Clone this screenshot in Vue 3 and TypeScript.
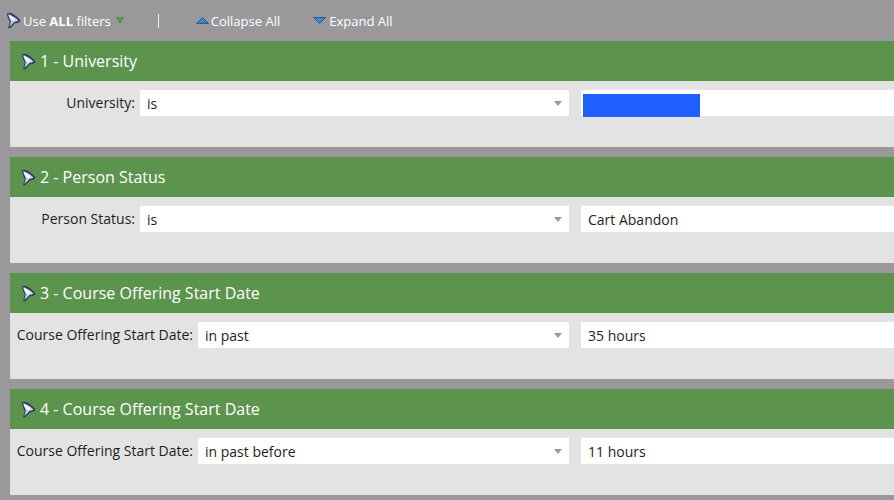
<script setup lang="ts">
interface Filter {
  title: string
  label: string
  op: string
  value: string
  redacted?: boolean
  wide?: boolean
}

const filters: Filter[] = [
  { title: '1 - University', label: 'University:', op: 'is', value: '', redacted: true },
  { title: '2 - Person Status', label: 'Person Status:', op: 'is', value: 'Cart Abandon' },
  { title: '3 - Course Offering Start Date', label: 'Course Offering Start Date:', op: 'in past', value: '35 hours', wide: true },
  { title: '4 - Course Offering Start Date', label: 'Course Offering Start Date:', op: 'in past before', value: '11 hours', wide: true },
]
</script>

<template>
  <div class="page">
    <div class="toolbar">
      <svg class="funnel" viewBox="0 0 16 18" width="15" height="17">
        <path d="M1 1.5 C3 0 6 1 9 3 C12 5 15 7.5 15.5 9.5 C13.5 11.5 11 12 9.5 12 L4.5 17.5 L2.2 17 L4 10.5 C2.5 7 1 4 1 1.5 Z" fill="#2b3d5c" />
        <path d="M2.2 2.4 C5 2.6 9.5 5.4 13.4 9 C12 10 10.5 10.4 9 10.6 L3.6 15.8 L5.2 10 C4 7.5 2.8 5 2.2 2.4 Z" fill="#b4c3da" />
        <path d="M2.8 3 C5 3.6 8 5.6 10.2 8.4 L7.8 9.4 L6 8.6 C4.8 6.8 3.6 5 2.8 3 Z" fill="#eef2f8" />
      </svg>
      <span class="tool-text use">Use <b>ALL</b> filters</span>
      <svg class="green" viewBox="0 0 8 7" width="8" height="7">
        <path d="M0.8 0.8 H7.2 L4 6.2 Z" fill="#55a844" stroke="#3d7f33" stroke-width="0.7" />
      </svg>
      <span class="divider"></span>
      <svg class="tri collapse-tri" viewBox="0 0 13 7" width="13" height="7">
        <path d="M6.5 0.5 L12.5 6.5 H0.5 Z" fill="#3f86c8" stroke="#1b4f86" stroke-width="0.8" />
      </svg>
      <span class="tool-text collapse">Collapse All</span>
      <svg class="tri" viewBox="0 0 13 7" width="13" height="7">
        <path d="M0.5 0.5 H12.5 L6.5 6.5 Z" fill="#3f86c8" stroke="#1b4f86" stroke-width="0.8" />
      </svg>
      <span class="tool-text">Expand All</span>
    </div>

    <section v-for="f in filters" :key="f.title" class="card">
      <header class="card-head">
        <svg class="head-funnel" viewBox="0 0 16 18" width="15" height="17">
          <path d="M1 1.5 C3 0 6 1 9 3 C12 5 15 7.5 15.5 9.5 C13.5 11.5 11 12 9.5 12 L4.5 17.5 L2.2 17 L4 10.5 C2.5 7 1 4 1 1.5 Z" fill="#2b3d5c" />
          <path d="M2.2 2.4 C5 2.6 9.5 5.4 13.4 9 C12 10 10.5 10.4 9 10.6 L3.6 15.8 L5.2 10 C4 7.5 2.8 5 2.2 2.4 Z" fill="#c8d4e6" />
          <path d="M2.8 3 C5 3.6 8 5.6 10.2 8.4 L7.8 9.4 L6 8.6 C4.8 6.8 3.6 5 2.8 3 Z" fill="#f4f7fb" />
        </svg>
        <h2>{{ f.title }}</h2>
      </header>
      <div class="card-body">
        <label class="field-label" :class="{ wide: f.wide }">{{ f.label }}</label>
        <div class="select">
          <span>{{ f.op }}</span>
          <svg viewBox="0 0 8 5" width="8" height="5"><path d="M0 0 H8 L4 5 Z" fill="#9b9b9b" /></svg>
        </div>
        <div class="value">
          <span v-if="f.redacted" class="redact"></span>
          <span v-else>{{ f.value }}</span>
        </div>
      </div>
    </section>
  </div>
</template>

<style>
html, body {
  margin: 0;
  background: #9a989b;
}
</style>

<style scoped>
.page {
  width: 894px;
  height: 500px;
  overflow: hidden;
  background: #9a989b;
  font-family: "Open Sans", "Liberation Sans", sans-serif;
  padding-left: 10px;
  box-sizing: border-box;
}

.toolbar {
  display: flex;
  align-items: center;
  height: 41px;
  margin-left: -4px;
  color: #fff;
  font-size: 13px;
}

.tool-text {
  white-space: nowrap;
}

.use {
  margin-left: 2px;
}

.use b {
  font-weight: 700;
}

.green {
  margin-left: 5px;
}

.divider {
  width: 1px;
  height: 14px;
  background: #f2f2f2;
  margin: 0 37px 0 34px;
}

.collapse {
  margin-right: 33px;
}

.tri {
  margin-right: 3px;
}

.collapse-tri {
  margin-right: 2px;
}

.card {
  width: 884px;
  height: 106px;
  margin-bottom: 10px;
  background: #e3e3e3;
  overflow: hidden;
}

.card-head {
  display: flex;
  align-items: center;
  height: 40px;
  padding-left: 11px;
  background: #5c934d;
  color: #fff;
}

.card-head h2 {
  margin: 0 0 0 4px;
  font-size: 16px;
  font-weight: 400;
  white-space: nowrap;
}

.head-funnel {
  flex: none;
}

.card-body {
  display: flex;
  align-items: flex-start;
  padding-top: 9px;
}

.field-label {
  width: 125px;
  flex: none;
  margin-right: 5px;
  height: 26px;
  line-height: 26px;
  text-align: right;
  font-size: 14px;
  color: #1e1e1e;
  white-space: nowrap;
}

.field-label.wide {
  width: 183px;
}

.select {
  flex: 1;
  min-width: 0;
  height: 26px;
  display: flex;
  align-items: center;
  justify-content: space-between;
  padding: 0 7px;
  margin-right: 12px;
  background: #fff;
  font-size: 14px;
  color: #1e1e1e;
  box-sizing: border-box;
}

.value {
  width: 313px;
  flex: none;
  height: 26px;
  line-height: 26px;
  padding: 1px 0 0 7px;
  background: #fff;
  font-size: 14px;
  color: #1e1e1e;
  box-sizing: border-box;
}

.redact {
  display: block;
  width: 117px;
  height: 23px;
  margin: 3px 0 0 -5px;
  background: #1f5fff;
}
</style>
